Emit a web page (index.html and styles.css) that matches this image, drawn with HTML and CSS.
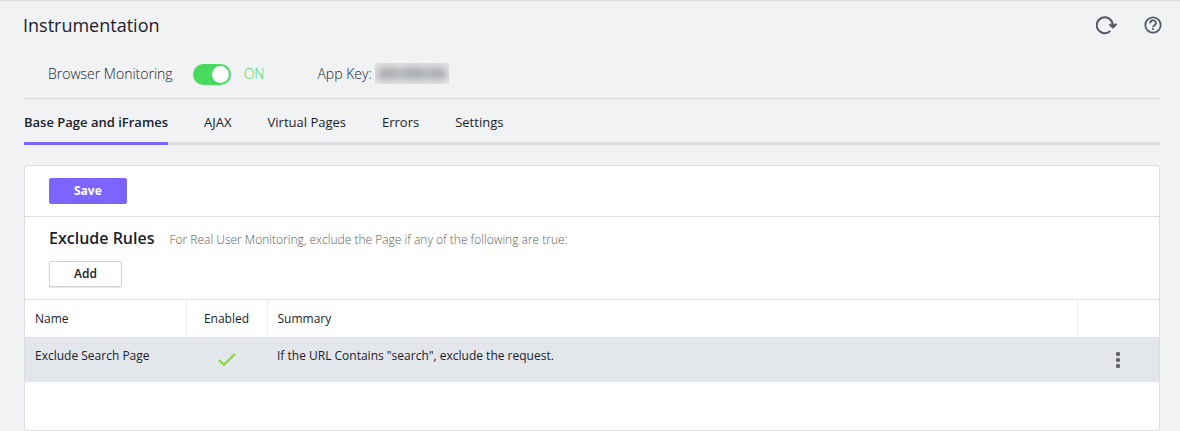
FILE: index.html
```html
<!DOCTYPE html>
<html lang="en">
<head>
  <meta charset="UTF-8">
  <title>Instrumentation</title>
  <link rel="stylesheet" href="styles.css">
</head>
<body>
  <header class="page-header">
    <h1>Instrumentation</h1>
    <div class="header-actions">
      <button class="icon-btn" type="button" aria-label="Refresh">
        <svg width="22" height="20" viewBox="0 0 22 20" fill="none" stroke="#545a63" stroke-width="2">
          <path d="M14.4 15.9A8 8 0 1 1 16.7 9V11"/>
          <path d="M13.4 9.2L16.9 12.3L20.6 8.8" stroke-width="2.2"/>
          <path d="M14.4 9.4H19.4L16.9 12Z" fill="#545a63" stroke="none"/>
        </svg>
      </button>
      <button class="icon-btn" type="button" aria-label="Help">
        <svg width="18" height="18" viewBox="0 0 18 18" fill="none" stroke="#545a63" stroke-width="1.8">
          <circle cx="9" cy="9" r="7.7"/>
          <path d="M6.3 7.3A2.8 2.6 0 1 1 10.7 9.1C9.5 10 9 10.2 9 11.3"/>
          <path d="M9 12.3V14"/>
        </svg>
      </button>
    </div>
  </header>

  <main class="content">
    <div class="status-bar">
      <label for="monitoring">Browser Monitoring</label>
      <input class="toggle" type="checkbox" id="monitoring" checked>
      <span class="toggle-state">ON</span>
      <span class="app-key">App Key: <span class="masked"></span></span>
    </div>

    <nav class="tabs">
      <a class="tab active" href="#base">Base Page and iFrames</a>
      <a class="tab" href="#ajax">AJAX</a>
      <a class="tab" href="#virtual">Virtual Pages</a>
      <a class="tab" href="#errors">Errors</a>
      <a class="tab" href="#settings">Settings</a>
    </nav>

    <section class="panel">
      <div class="toolbar">
        <button class="btn btn-primary" type="button">Save</button>
      </div>
      <div class="rules">
        <div class="rules-title">
          <h2>Exclude Rules</h2>
          <p>For Real User Monitoring, exclude the Page if any of the following are true:</p>
        </div>
        <button class="btn btn-default" type="button">Add</button>
      </div>
      <table class="rules-table">
        <thead>
          <tr>
            <th class="col-name">Name</th>
            <th class="col-enabled">Enabled</th>
            <th>Summary</th>
            <th class="col-menu"></th>
          </tr>
        </thead>
        <tbody>
          <tr>
            <td>Exclude Search Page</td>
            <td class="col-enabled">
              <svg class="check" width="18" height="14" viewBox="0 0 18 14" fill="none" stroke="#7bdc2c" stroke-width="2">
                <path d="M1 7L6 11.8L17 0.9"/>
              </svg>
            </td>
            <td>If the URL Contains "search", exclude the request.</td>
            <td class="col-menu">
              <button class="icon-btn menu-btn" type="button" aria-label="Rule actions">
                <svg width="6" height="18" viewBox="0 0 6 18" fill="#666">
                  <circle cx="3" cy="3" r="2.2"/>
                  <circle cx="3" cy="9" r="2.2"/>
                  <circle cx="3" cy="15" r="2.2"/>
                </svg>
              </button>
            </td>
          </tr>
        </tbody>
      </table>
    </section>
  </main>
</body>
</html>
```

FILE: styles.css
```css
* { box-sizing: border-box; }
body { margin: 0; background: #f1f2f4; color: #1b1d2b; font-family: "Open Sans", sans-serif; font-size: 13px; line-height: 20px; border-top: 1px solid #dcdee1; }
h1, h2, p { margin: 0; }
button { font-family: inherit; cursor: pointer; }

.page-header { display: flex; align-items: center; justify-content: space-between; height: 48px; padding: 0 18px 0 23px; }
h1 { font-size: 18px; font-weight: 400; line-height: 24px; }
.header-actions { display: flex; align-items: center; gap: 26px; }
.icon-btn { display: flex; padding: 0; border: 0; background: none; }

.content { padding: 0 20px 0 24px; }
.status-bar { display: flex; align-items: center; height: 50px; padding-left: 24px; border-bottom: 1px solid #dcdee1; font-size: 14px; font-weight: 300; }
.toggle { appearance: none; display: flex; width: 38px; height: 21px; margin: 2px 13px 0 20px; padding: 2px; border-radius: 11px; background: #b9bcc2; cursor: pointer; }
.toggle::before { content: ""; width: 17px; height: 17px; border-radius: 50%; background: #fff; }
.toggle:checked { justify-content: flex-end; background: #47da5f; }
.toggle-state { color: #47da5f; }
.app-key { display: flex; align-items: center; gap: 3px; margin-left: 53px; }
.masked { width: 74px; height: 21px; overflow: hidden; background: #e3e4e6; }
.masked::before { content: ""; display: block; height: 11px; margin: 5px 3px; background: linear-gradient(90deg, #a0a2a6 20%, #b4b6b9 33%, #a0a2a6 46%, #a0a2a6 60%, #b4b6b9 72%, #a0a2a6 86%); filter: blur(4px); }

.tabs { display: flex; gap: 36px; border-bottom: 3px solid #dcdee1; }
.tab { height: 46px; margin-bottom: -3px; padding-top: 13px; color: inherit; text-decoration: none; }
.tab.active { border-bottom: 3px solid #7b64ff; font-weight: 600; }

.panel { min-height: 266px; margin-top: 20px; background: #fff; border: 1px solid #dcdfe2; border-radius: 3px; }
.toolbar { padding: 12px 24px; border-bottom: 1px solid #dcdfe2; }
.btn { display: block; height: 26px; padding: 0 24px; border: 1px solid #cfd2d8; border-radius: 2px; background: #fff; color: #1b1d2b; font-size: 12px; font-weight: 600; line-height: 20px; }
.btn-primary { border-color: #7b64ff; background: #7b64ff; color: #fff; font-weight: 700; }
.btn-default { box-shadow: 0 1px 1px #e4e6e9; }

.rules { padding: 9px 24px 12px; }
.rules-title { display: flex; align-items: baseline; gap: 15px; margin-bottom: 11px; }
h2 { font-size: 16px; font-weight: 600; line-height: 24px; }
.rules-title p { color: #5c5c5c; font-size: 12px; font-weight: 300; }

.rules-table { width: 100%; border-collapse: collapse; table-layout: fixed; font-size: 12px; }
.rules-table th { height: 38px; padding: 0 10px; border: 1px solid #dcdfe2; border-width: 1px 0; font-weight: 400; text-align: left; }
.rules-table th + th { border-left: 1px solid #eceef0; }
.rules-table td { height: 44px; padding: 8px 10px; background: #e3e6eb; vertical-align: top; }
.rules-table .col-name { width: 161px; }
.rules-table .col-enabled { width: 81px; text-align: center; }
.rules-table .col-menu { width: 82px; }
.rules-table td.col-enabled, .rules-table td.col-menu { padding: 0; vertical-align: middle; }
.check { display: block; margin: 0 auto; }
.menu-btn { margin: 0 auto; }
```
